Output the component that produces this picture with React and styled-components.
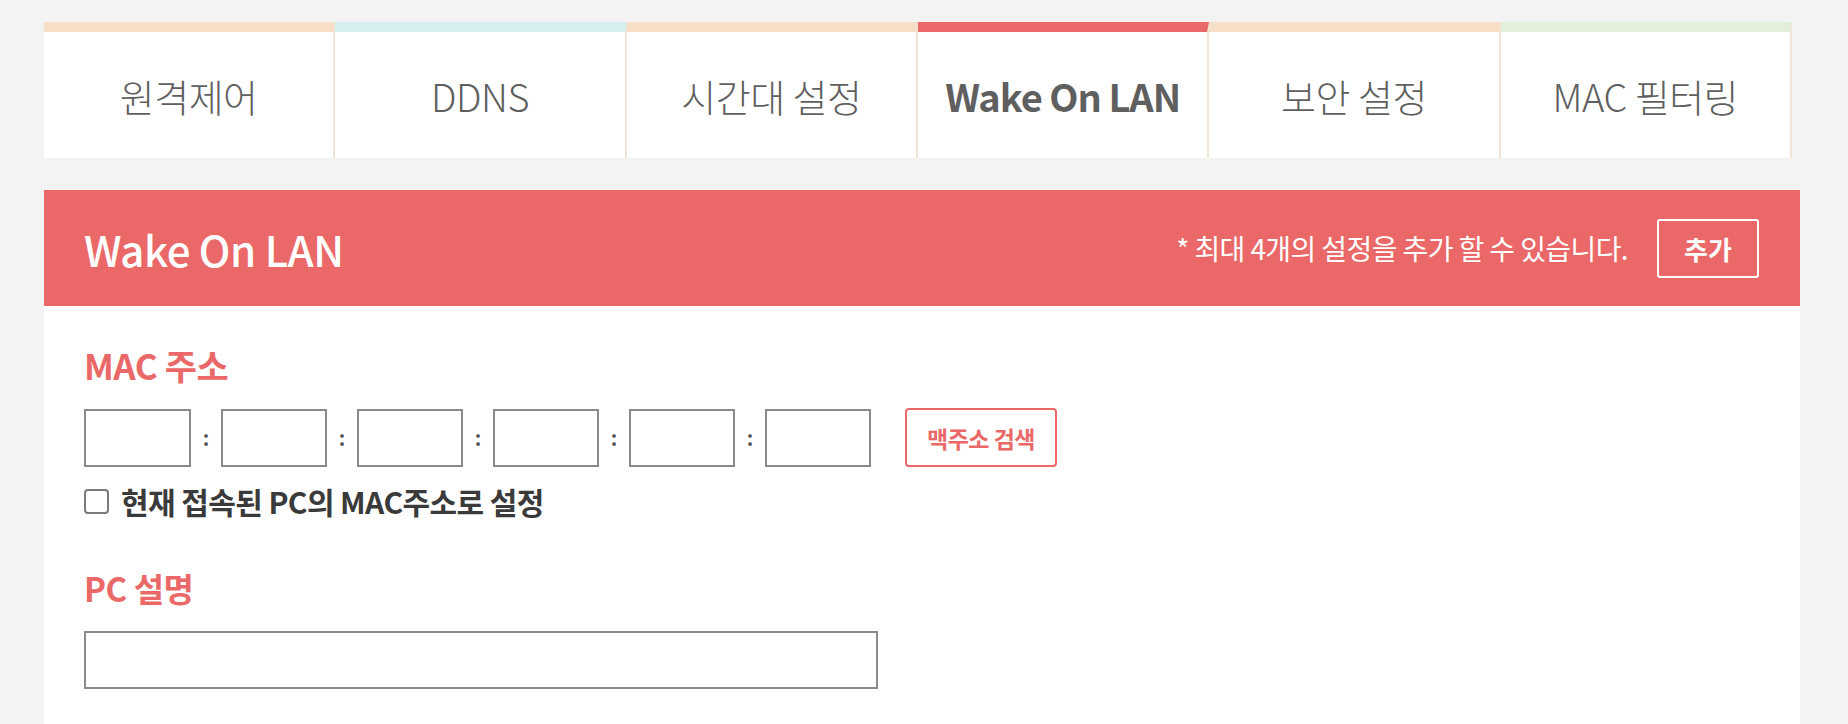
import React from 'react';
import styled, { createGlobalStyle } from 'styled-components';

const GlobalStyle = createGlobalStyle`
  html, body {
    margin: 0;
    padding: 0;
    background: #f3f3f3;
    font-family: "Noto Sans CJK KR", "Noto Sans", sans-serif;
  }
`;

const Page = styled.div`
  padding: 22px 48px 0 44px;
`;

const TabBar = styled.nav`
  display: grid;
  grid-template-columns: repeat(6, 1fr);
  margin-right: 8px;
`;

const Tab = styled.div`
  height: 126px;
  display: flex;
  align-items: center;
  justify-content: center;
  background: #fff;
  border-top: 10px solid ${p => p.$band};
  border-right: 2px solid #f1e3d6;
  font-size: 38px;
  font-weight: ${p => (p.$active ? 700 : 300)};
  color: #5f5f5f;
  letter-spacing: ${p => (p.$active ? '-1px' : '-0.5px')};
`;

const Panel = styled.section`
  margin-top: 32px;
  background: #fff;
  min-height: 534px;
`;

const PanelHeader = styled.header`
  height: 116px;
  padding: 0 41px 0 40px;
  background: #ea6867;
  display: flex;
  align-items: center;
  justify-content: space-between;
  color: #fff;
`;

const Title = styled.h2`
  margin: 0;
  font-size: 42px;
  font-weight: 500;
  letter-spacing: -0.5px;
`;

const HeaderRight = styled.div`
  display: flex;
  align-items: center;
  gap: 29px;
`;

const Note = styled.span`
  font-size: 28px;
  letter-spacing: -0.6px;
`;

const AddButton = styled.button`
  width: 102px;
  height: 59px;
  border: 2px solid #fff;
  border-radius: 3px;
  background: transparent;
  color: #fff;
  font-family: inherit;
  font-size: 26px;
  font-weight: 700;
`;

const Body = styled.div`
  padding: 39px 40px 0;
`;

const Label = styled.h3`
  margin: 0 0 23px;
  font-size: ${p => p.$size}px;
  line-height: 40px;
  font-weight: 700;
  color: #ea6867;
  letter-spacing: -0.5px;
`;

const MacRow = styled.div`
  display: flex;
  align-items: center;
`;

const Field = styled.input`
  box-sizing: border-box;
  width: ${p => p.$w}px;
  height: 58px;
  border: 2px solid #8a8a8a;
  border-radius: 0;
  background: #fff;
  outline: none;
  font-size: 24px;
`;

const Colon = styled.span`
  width: 30px;
  text-align: center;
  font-size: 20px;
  font-weight: 700;
  color: #555;
`;

const SearchButton = styled.button`
  margin-left: 34px;
  width: 152px;
  height: 59px;
  border: 2px solid #ea6867;
  border-radius: 4px;
  background: #fff;
  color: #ea6867;
  font-family: inherit;
  font-size: 23px;
  font-weight: 700;
  letter-spacing: -0.5px;
`;

const CheckRow = styled.label`
  display: flex;
  align-items: center;
  gap: 12px;
  margin-top: 15px;
  font-size: 30px;
  line-height: 38px;
  font-weight: 700;
  color: #3a3a3a;
  letter-spacing: -0.6px;
`;

const Check = styled.input`
  appearance: none;
  margin: 0;
  width: 25px;
  height: 25px;
  border: 2px solid #7a7a7a;
  border-radius: 4px;
  background: #fff;
`;

const Group = styled.div`
  margin-top: ${p => p.$top || 0}px;
`;

const tabs = [
  { name: '원격제어', band: '#f7dec6' },
  { name: 'DDNS', band: '#d5f0ef' },
  { name: '시간대 설정', band: '#f7dec6' },
  { name: 'Wake On LAN', band: '#ea6867', active: true },
  { name: '보안 설정', band: '#f7dec6' },
  { name: 'MAC 필터링', band: '#e2efdb' },
];

export default function App() {
  return (
    <>
      <GlobalStyle />
      <Page>
        <TabBar>
          {tabs.map(t => (
            <Tab key={t.name} $band={t.band} $active={t.active}>
              {t.name}
            </Tab>
          ))}
        </TabBar>
        <Panel>
          <PanelHeader>
            <Title>Wake On LAN</Title>
            <HeaderRight>
              <Note>* 최대 4개의 설정을 추가 할 수 있습니다.</Note>
              <AddButton>추가</AddButton>
            </HeaderRight>
          </PanelHeader>
          <Body>
            <Group>
              <Label $size={35}>MAC 주소</Label>
              <MacRow>
                {[0, 1, 2, 3, 4, 5].map(i => (
                  <React.Fragment key={i}>
                    {i > 0 && <Colon>:</Colon>}
                    <Field $w={i === 0 ? 107 : 106} maxLength={2} />
                  </React.Fragment>
                ))}
                <SearchButton>맥주소 검색</SearchButton>
              </MacRow>
              <CheckRow>
                <Check type="checkbox" />
                현재 접속된 PC의 MAC주소로 설정
              </CheckRow>
            </Group>
            <Group $top={48}>
              <Label $size={33}>PC 설명</Label>
              <Field $w={794} />
            </Group>
          </Body>
        </Panel>
      </Page>
    </>
  );
}
